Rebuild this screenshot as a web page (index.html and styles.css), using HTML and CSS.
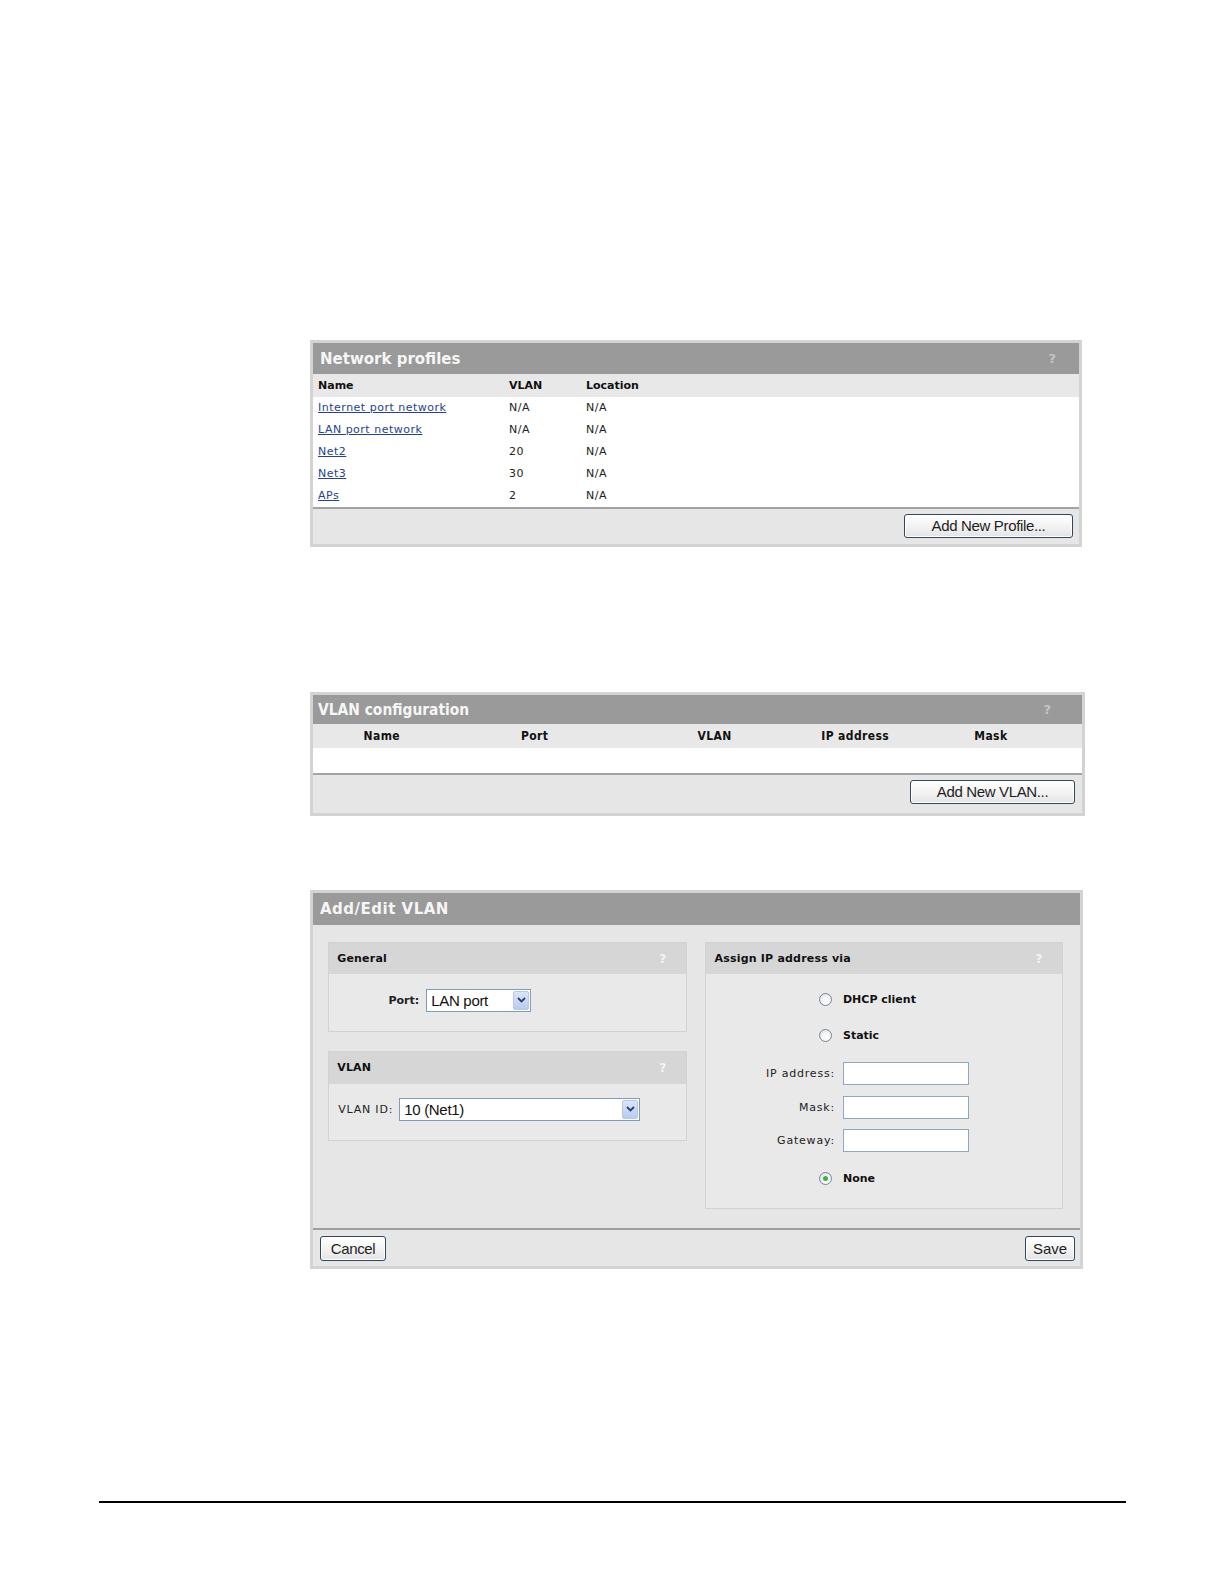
FILE: index.html
```html
<!DOCTYPE html>
<html>
<head>
<meta charset="utf-8">
<title>Network profiles</title>
<link rel="stylesheet" href="styles.css">
</head>
<body>
<div class="doc">

  <section class="panel panel-profiles">
    <div class="titlebar t-prof"><span class="title">Network profiles</span><span class="help">?</span></div>
    <div class="prof-grid prof-head"><span>Name</span><span>VLAN</span><span>Location</span></div>
    <div class="prof-body">
      <div class="prof-grid prof-row"><a href="#">Internet port network</a><span>N/A</span><span>N/A</span></div>
      <div class="prof-grid prof-row"><a href="#">LAN port network</a><span>N/A</span><span>N/A</span></div>
      <div class="prof-grid prof-row"><a href="#">Net2</a><span>20</span><span>N/A</span></div>
      <div class="prof-grid prof-row"><a href="#">Net3</a><span>30</span><span>N/A</span></div>
      <div class="prof-grid prof-row"><a href="#">APs</a><span>2</span><span>N/A</span></div>
    </div>
    <div class="footer f-prof end"><button class="btn btn-profile">Add New Profile...</button></div>
  </section>

  <section class="panel panel-vlancfg">
    <div class="titlebar t-cfg condensed"><span class="title">VLAN configuration</span><span class="help">?</span></div>
    <div class="cfg-grid cfg-head"><span>Name</span><span>Port</span><span>VLAN</span><span>IP address</span><span>Mask</span></div>
    <div class="cfg-empty"></div>
    <div class="footer f-cfg end"><button class="btn btn-vlan">Add New VLAN...</button></div>
  </section>

  <section class="panel panel-edit">
    <div class="titlebar t-edit"><span class="title">Add/Edit VLAN</span></div>
    <div class="edit-body">
      <div class="edit-left">
        <div class="box box-general">
          <div class="box-head"><span>General</span><span class="help help-sub">?</span></div>
          <div class="box-content port-content">
            <span class="lbl bold lbl-port">Port:</span>
            <div class="select select-port"><span class="select-text">LAN port</span><span class="select-arrow"><svg width="9" height="6" viewBox="0 0 9 6"><polyline points="1,1 4.5,4.5 8,1" fill="none" stroke="#2b3f73" stroke-width="1.8"/></svg></span></div>
          </div>
        </div>
        <div class="box box-vlan">
          <div class="box-head"><span>VLAN</span><span class="help help-sub">?</span></div>
          <div class="box-content vlan-content">
            <span class="lbl lbl-spaced">VLAN ID:</span>
            <div class="select select-vlan"><span class="select-text">10 (Net1)</span><span class="select-arrow"><svg width="9" height="6" viewBox="0 0 9 6"><polyline points="1,1 4.5,4.5 8,1" fill="none" stroke="#2b3f73" stroke-width="1.8"/></svg></span></div>
          </div>
        </div>
      </div>
      <div class="box box-assign">
        <div class="box-head"><span>Assign IP address via</span><span class="help help-sub">?</span></div>
        <div class="box-content assign-grid">
          <span class="radio-cell r-dhcp"><span class="radio"></span></span><span class="bold r-dhcp">DHCP client</span>
          <span class="radio-cell r-static"><span class="radio"></span></span><span class="bold r-static">Static</span>
          <span class="lbl lbl-spaced r-ip">IP address:</span><span class="field r-ip"></span>
          <span class="lbl lbl-spaced r-field">Mask:</span><span class="field r-field"></span>
          <span class="lbl lbl-spaced r-field">Gateway:</span><span class="field r-field"></span>
          <span class="radio-cell r-none"><span class="radio checked"></span></span><span class="bold r-none">None</span>
        </div>
      </div>
    </div>
    <div class="footer f-edit split"><button class="btn btn-cancel">Cancel</button><button class="btn btn-save">Save</button></div>
  </section>

  <div class="page-rule"></div>
</div>
</body>
</html>
```

FILE: styles.css
```css
html, body {
  margin: 0;
  padding: 0;
  background: #ffffff;
}

body {
  font-family: "DejaVu Sans", Verdana, sans-serif;
  color: #111111;
}

.doc {
  padding-top: 340px;
  padding-bottom: 60px;
}

/* ---------- panels ---------- */
.panel {
  box-sizing: border-box;
  margin-left: 310px;
  border: 3px solid #d3d3d3;
  background: #e6e6e6;
}

.panel-profiles { width: 772px; }
.panel-vlancfg { width: 775px; margin-top: 145px; }
.panel-edit { width: 773px; margin-top: 74px; }

.titlebar {
  display: flex;
  align-items: center;
  justify-content: space-between;
  background: #9a9a9a;
  color: #f6f6f6;
  font-weight: bold;
  font-size: 15px;
  padding: 0 23px 0 7px;
}

.t-prof { height: 31px; }
.t-cfg { height: 29px; padding: 0 31px 0 5px; font-size: 15.4px; }
.t-edit { height: 31.5px; letter-spacing: 0.5px; }

.condensed {
  font-family: "DejaVu Sans Condensed", "DejaVu Sans", sans-serif;
}

.help {
  color: #c4c4c4;
  font-size: 13px;
  font-weight: bold;
  font-family: "DejaVu Sans", sans-serif;
  letter-spacing: 0;
}

/* ---------- network profiles table ---------- */
.prof-grid {
  display: grid;
  grid-template-columns: 191px 77px 1fr;
  align-items: center;
  padding-left: 5px;
  font-size: 11px;
}

.prof-head {
  height: 22.5px;
  background: #e8e8e8;
  font-weight: bold;
}

.prof-body {
  background: #ffffff;
  border-bottom: 2px solid #a3a3a3;
}

.prof-row {
  height: 22.06px;
  color: #222222;
  letter-spacing: 0.5px;
}

.prof-row a {
  color: #26428b;
  text-decoration: underline;
}

/* ---------- footer & buttons ---------- */
.footer {
  display: flex;
  align-items: flex-start;
  background: #e6e6e6;
  box-sizing: border-box;
}

.f-prof { height: 35.4px; padding: 5px 6px 0 6px; }
.f-cfg { height: 38.5px; padding: 5px 7px 0 7px; }
.f-edit { height: 37.4px; padding: 6px 5px 0 7px; }
.end { justify-content: flex-end; }
.split { justify-content: space-between; border-top: 2px solid #9f9f9f; }

.btn {
  box-sizing: border-box;
  height: 24.3px;
  border: 1px solid #33465e;
  border-radius: 3px;
  background: linear-gradient(#ffffff, #f2f2f2 55%, #e3e3e3);
  font-family: "Liberation Sans", Arial, sans-serif;
  font-size: 15px;
  letter-spacing: -0.35px;
  color: #1e1e1e;
  padding: 0;
  margin: 0;
  box-shadow: inset 0 0 0 1px #ffffff;
}

.btn-profile { width: 169px; }
.btn-vlan { width: 165px; }
.btn-cancel { width: 66px; }
.btn-save { width: 50px; letter-spacing: 0; }

/* ---------- VLAN configuration ---------- */
.cfg-grid {
  display: grid;
  grid-template-columns: 137.6px 168px 192px 89.2px 1fr;
  align-items: center;
  text-align: center;
  font-family: "DejaVu Sans Condensed", "DejaVu Sans", sans-serif;
  font-size: 12px;
  letter-spacing: 0.4px;
  font-weight: bold;
}

.cfg-head {
  height: 24.3px;
  background: #e8e8e8;
}

.cfg-empty {
  height: 24.3px;
  background: #ffffff;
  border-bottom: 2px solid #a3a3a3;
}

/* ---------- Add/Edit VLAN ---------- */
.edit-body {
  display: grid;
  grid-template-columns: 359px 358px;
  column-gap: 18.3px;
  align-items: start;
  padding: 17.2px 16px 0 15.2px;
  height: 303.5px;
  box-sizing: border-box;
}

.edit-left {
  display: flex;
  flex-direction: column;
  gap: 19.3px;
}

.box {
  box-sizing: border-box;
  border: 1px solid #d2d2d2;
  background: #e9e9e9;
}

.box-general, .box-vlan { height: 90px; }
.box-assign { height: 267px; }

.box-head {
  display: flex;
  align-items: center;
  justify-content: space-between;
  height: 31.4px;
  background: #d6d6d6;
  padding: 0 20px 0 8px;
  font-size: 11px;
  letter-spacing: 0.2px;
  font-weight: bold;
}

.help-sub {
  color: #f4f4f4;
  font-size: 12px;
}

.box-content {
  font-size: 11px;
}

.bold { font-weight: bold; }

.lbl { color: #222222; }

.lbl-spaced { letter-spacing: 0.8px; }

.port-content {
  display: grid;
  grid-template-columns: 90px auto;
  column-gap: 7px;
  justify-content: start;
  align-items: center;
  padding-top: 15px;
}

.lbl-port { text-align: right; }

.vlan-content {
  display: grid;
  grid-template-columns: 61px auto;
  justify-content: start;
  align-items: center;
  padding: 14px 0 0 9px;
}

.select {
  box-sizing: border-box;
  display: flex;
  align-items: center;
  justify-content: space-between;
  background: #ffffff;
  border: 1px solid #7f9db9;
  padding: 1px 1px 1px 4px;
  font-family: "Liberation Sans", Arial, sans-serif;
  font-size: 15px;
  letter-spacing: -0.3px;
  color: #111111;
}

.select-port { width: 105px; height: 22.3px; }
.select-vlan { width: 241px; height: 23.2px; }

.select-arrow {
  box-sizing: border-box;
  display: flex;
  align-items: center;
  justify-content: center;
  width: 16px;
  height: 100%;
  background: linear-gradient(#dbe5f8, #b9cbf0);
  border: 1px solid #b6c7ea;
  border-radius: 2px;
}

/* assign grid */
.assign-grid {
  display: grid;
  grid-template-columns: 128.5px 1fr;
  column-gap: 8px;
  align-items: center;
  padding-top: 16.3px;
}

.assign-grid .lbl {
  text-align: right;
}

.radio-cell {
  display: flex;
  justify-content: flex-end;
  padding-right: 2.5px;
}

.r-dhcp { height: 18px; display: flex; align-items: center; }
.r-static { height: 18px; margin-top: 18.4px; display: flex; align-items: center; }
.r-ip { height: 23.2px; margin-top: 17.3px; }
.r-field { height: 23.2px; margin-top: 10.2px; }
.r-none { height: 18px; margin-top: 17.3px; display: flex; align-items: center; }

.assign-grid .lbl.r-ip, .assign-grid .lbl.r-field {
  display: flex;
  align-items: center;
  justify-content: flex-end;
}

.radio-cell.r-dhcp, .radio-cell.r-static, .radio-cell.r-none {
  justify-content: flex-end;
}

.radio {
  box-sizing: border-box;
  display: block;
  width: 13px;
  height: 13px;
  border-radius: 50%;
  border: 1px solid #73869a;
  background: radial-gradient(circle at 60% 65%, #ffffff 0%, #f3f3f3 45%, #d9d9d9 100%);
  position: relative;
}

.radio.checked::after {
  content: "";
  position: absolute;
  left: 3px;
  top: 3px;
  width: 5px;
  height: 5px;
  border-radius: 50%;
  background: #3fb03f;
}

.field {
  box-sizing: border-box;
  display: block;
  width: 126.4px;
  background: #ffffff;
  border: 1px solid #8fa8c2;
}

/* ---------- page rule ---------- */
.page-rule {
  margin: 232.6px 0 0 99px;
  width: 1027px;
  height: 2px;
  background: #000000;
}
```
